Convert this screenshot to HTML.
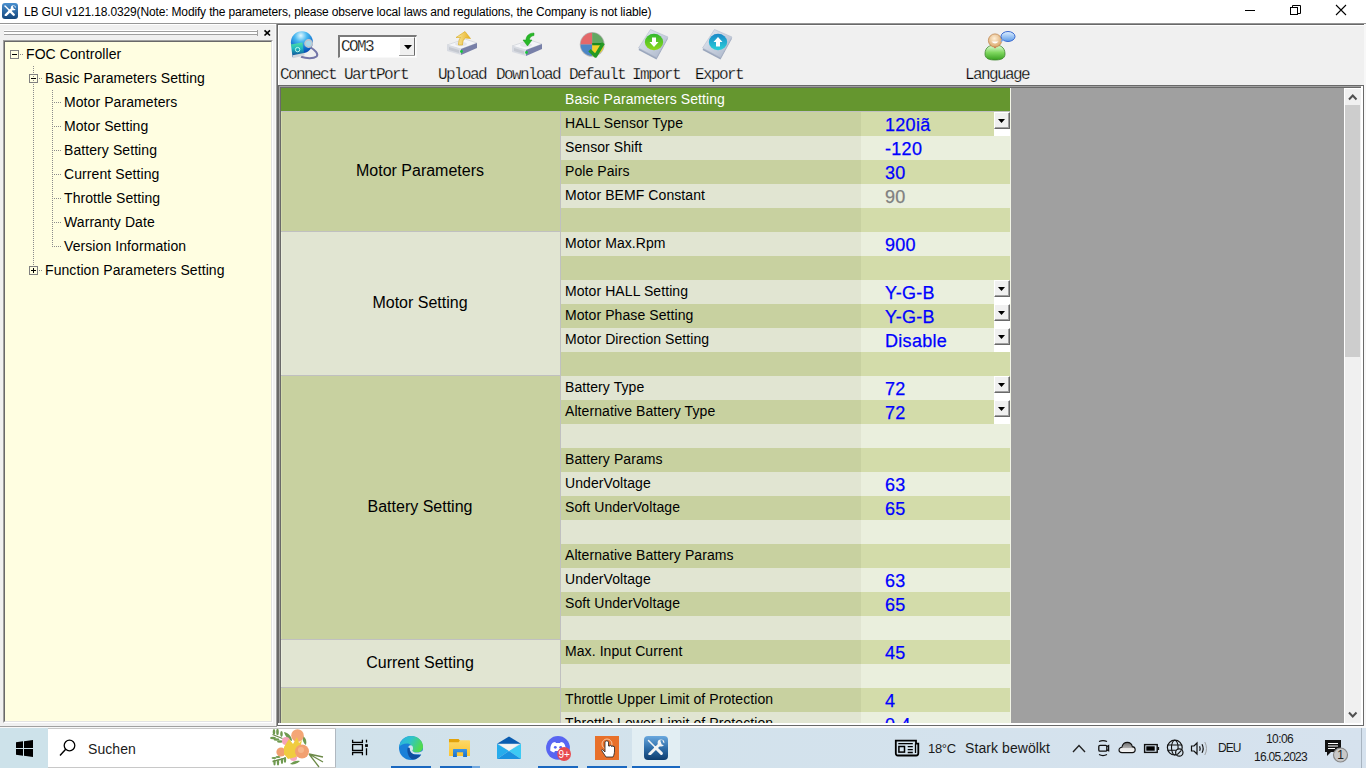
<!DOCTYPE html>
<html><head><meta charset="utf-8"><style>
html,body{margin:0;padding:0;width:1366px;height:768px;overflow:hidden;background:#fff;font-family:'Liberation Sans', sans-serif}
</style></head><body>
<div style="position:absolute;left:0px;top:0px;width:1366px;height:23px;background:#fff"></div><div style="position:absolute;left:0px;top:23px;width:1366px;height:1px;background:#969696"></div><svg style="position:absolute;left:2px;top:3px" width="16" height="16" viewBox="0 0 24 24">
<defs><linearGradient id="ig" x1="0" y1="0" x2="0" y2="1"><stop offset="0" stop-color="#4a90d0"/><stop offset="1" stop-color="#13457a"/></linearGradient>
<mask id="igm"><rect width="24" height="24" fill="#fff"/><path d="M17.2 4.2 L18.6 7.6 L22 8.8" stroke="#000" stroke-width="2.4" fill="none"/></mask></defs>
<rect width="24" height="24" rx="4.5" fill="url(#ig)"/>
<g mask="url(#igm)">
<path d="M4.5 4.5 L11 11" stroke="#fff" stroke-width="2" stroke-linecap="round"/>
<path d="M11.5 11.5 L17.6 17.6" stroke="#fff" stroke-width="3.6" stroke-linecap="round"/>
<path d="M5.6 18.2 L15.5 8.5" stroke="#fff" stroke-width="3.6" stroke-linecap="round"/>
<circle cx="17" cy="7" r="3.8" fill="#fff"/>
</g>
</svg><div style="position:absolute;left:24px;top:0.03px;line-height:24px;font-size:12px;font-family:'Liberation Sans', sans-serif;color:#000;white-space:nowrap;letter-spacing:0.08px"><span style="letter-spacing:-0.15px">LB GUI v121.18.0329(Note: Modify the parameters, please observe local laws and regulations, the Company is not liable)</span></div><div style="position:absolute;left:1245px;top:10px;width:10px;height:1px;background:#000"></div><div style="position:absolute;left:1290px;top:7px;width:8px;height:8px;border:1px solid #000;box-sizing:border-box;background:#fff"></div><svg style="position:absolute;left:1292px;top:5px" width="9" height="9"><path d="M0.5 2 V0.5 H8.5 V8.5 H6" fill="none" stroke="#000" stroke-width="1"/></svg><svg style="position:absolute;left:1335px;top:4px" width="12" height="12"><path d="M1 1 L11 11 M11 1 L1 11" stroke="#000" stroke-width="1.1"/></svg><div style="position:absolute;left:0px;top:24px;width:277px;height:704px;background:#f0f0f0"></div><div style="position:absolute;left:4px;top:30px;width:254px;height:1px;background:#fff"></div><div style="position:absolute;left:4px;top:31px;width:254px;height:1px;background:#a0a0a0"></div><div style="position:absolute;left:4px;top:32px;width:254px;height:2px;background:#fff"></div><div style="position:absolute;left:4px;top:34px;width:254px;height:1px;background:#a0a0a0"></div><div style="position:absolute;left:257px;top:30px;width:1px;height:6px;background:#a0a0a0"></div><svg style="position:absolute;left:263px;top:29px" width="9" height="8"><path d="M1.5 1.3 L7 6.5 M7 1.3 L1.5 6.5" stroke="#000" stroke-width="1.7"/></svg><div style="position:absolute;left:3px;top:40px;width:270px;height:683px;background:#fffee1;border-top:1px solid #a0a0a0;border-left:1px solid #a0a0a0;border-right:1px solid #fff;border-bottom:1px solid #fff;box-sizing:border-box"></div><div style="position:absolute;left:4px;top:41px;width:268px;height:681px;border-top:1px solid #696969;border-left:1px solid #696969;border-right:1px solid #e3e3e3;border-bottom:1px solid #e3e3e3;box-sizing:border-box"></div><div style="position:absolute;left:10px;top:50px;width:9px;height:9px;border:1px solid #808080;box-sizing:border-box"></div><div style="position:absolute;left:12px;top:54px;width:5px;height:1px;background:#000"></div><div style="position:absolute;left:20px;top:54px;width:4px;height:1px;background:repeating-linear-gradient(to right,#8c8c8c 0 1px,transparent 1px 2px)"></div><div style="position:absolute;left:26px;top:40.37px;line-height:28px;font-size:14px;font-family:'Liberation Sans', sans-serif;color:#000;white-space:nowrap;letter-spacing:0.08px">FOC Controller</div><div style="position:absolute;left:33px;top:66px;width:1px;height:200px;background:repeating-linear-gradient(to bottom,#8c8c8c 0 1px,transparent 1px 2px)"></div><div style="position:absolute;left:29px;top:74px;width:9px;height:9px;border:1px solid #808080;box-sizing:border-box"></div><div style="position:absolute;left:31px;top:78px;width:5px;height:1px;background:#000"></div><div style="position:absolute;left:39px;top:78px;width:4px;height:1px;background:repeating-linear-gradient(to right,#8c8c8c 0 1px,transparent 1px 2px)"></div><div style="position:absolute;left:45px;top:64.37px;line-height:28px;font-size:14px;font-family:'Liberation Sans', sans-serif;color:#000;white-space:nowrap;letter-spacing:0.08px">Basic Parameters Setting</div><div style="position:absolute;left:52px;top:90px;width:1px;height:157px;background:repeating-linear-gradient(to bottom,#8c8c8c 0 1px,transparent 1px 2px)"></div><div style="position:absolute;left:52px;top:102px;width:10px;height:1px;background:repeating-linear-gradient(to right,#8c8c8c 0 1px,transparent 1px 2px)"></div><div style="position:absolute;left:64px;top:88.37px;line-height:28px;font-size:14px;font-family:'Liberation Sans', sans-serif;color:#000;white-space:nowrap;letter-spacing:0.08px">Motor Parameters</div><div style="position:absolute;left:52px;top:126px;width:10px;height:1px;background:repeating-linear-gradient(to right,#8c8c8c 0 1px,transparent 1px 2px)"></div><div style="position:absolute;left:64px;top:112.37px;line-height:28px;font-size:14px;font-family:'Liberation Sans', sans-serif;color:#000;white-space:nowrap;letter-spacing:0.08px">Motor Setting</div><div style="position:absolute;left:52px;top:150px;width:10px;height:1px;background:repeating-linear-gradient(to right,#8c8c8c 0 1px,transparent 1px 2px)"></div><div style="position:absolute;left:64px;top:136.37px;line-height:28px;font-size:14px;font-family:'Liberation Sans', sans-serif;color:#000;white-space:nowrap;letter-spacing:0.08px">Battery Setting</div><div style="position:absolute;left:52px;top:174px;width:10px;height:1px;background:repeating-linear-gradient(to right,#8c8c8c 0 1px,transparent 1px 2px)"></div><div style="position:absolute;left:64px;top:160.37px;line-height:28px;font-size:14px;font-family:'Liberation Sans', sans-serif;color:#000;white-space:nowrap;letter-spacing:0.08px">Current Setting</div><div style="position:absolute;left:52px;top:198px;width:10px;height:1px;background:repeating-linear-gradient(to right,#8c8c8c 0 1px,transparent 1px 2px)"></div><div style="position:absolute;left:64px;top:184.37px;line-height:28px;font-size:14px;font-family:'Liberation Sans', sans-serif;color:#000;white-space:nowrap;letter-spacing:0.08px">Throttle Setting</div><div style="position:absolute;left:52px;top:222px;width:10px;height:1px;background:repeating-linear-gradient(to right,#8c8c8c 0 1px,transparent 1px 2px)"></div><div style="position:absolute;left:64px;top:208.37px;line-height:28px;font-size:14px;font-family:'Liberation Sans', sans-serif;color:#000;white-space:nowrap;letter-spacing:0.08px">Warranty Date</div><div style="position:absolute;left:52px;top:246px;width:10px;height:1px;background:repeating-linear-gradient(to right,#8c8c8c 0 1px,transparent 1px 2px)"></div><div style="position:absolute;left:64px;top:232.37px;line-height:28px;font-size:14px;font-family:'Liberation Sans', sans-serif;color:#000;white-space:nowrap;letter-spacing:0.08px">Version Information</div><div style="position:absolute;left:29px;top:266px;width:9px;height:9px;border:1px solid #808080;box-sizing:border-box"></div><div style="position:absolute;left:31px;top:270px;width:5px;height:1px;background:#000"></div><div style="position:absolute;left:33px;top:268px;width:1px;height:5px;background:#000"></div><div style="position:absolute;left:39px;top:270px;width:4px;height:1px;background:repeating-linear-gradient(to right,#8c8c8c 0 1px,transparent 1px 2px)"></div><div style="position:absolute;left:45px;top:256.37px;line-height:28px;font-size:14px;font-family:'Liberation Sans', sans-serif;color:#000;white-space:nowrap;letter-spacing:0.08px">Function Parameters Setting</div><div style="position:absolute;left:277px;top:24px;width:1px;height:704px;background:#696969"></div><div style="position:absolute;left:276px;top:24px;width:1px;height:704px;background:#a0a0a0"></div><div style="position:absolute;left:278px;top:24px;width:1088px;height:61px;background:#f0f0f0"></div><div style="position:absolute;left:277px;top:24px;width:1089px;height:1px;background:#696969"></div><div style="position:absolute;left:278px;top:25px;width:1088px;height:1px;background:#fff"></div><div style="position:absolute;left:278px;top:25px;width:1px;height:60px;background:#fff"></div><div style="position:absolute;left:0px;top:24px;width:276px;height:1px;background:#fff"></div><div style="position:absolute;left:275px;top:25px;width:1px;height:701px;background:#f8f8f8"></div><svg style="position:absolute;left:288px;top:28px" width="34" height="34" viewBox="0 0 34 34">
<defs>
<radialGradient id="gl" cx="0.45" cy="0.2" r="0.8"><stop offset="0" stop-color="#e0f8ff"/><stop offset="0.35" stop-color="#48b8f0"/><stop offset="0.75" stop-color="#1070d0"/><stop offset="1" stop-color="#0a4ab0"/></radialGradient>
<linearGradient id="scr" x1="0" y1="0" x2="0" y2="1"><stop offset="0" stop-color="#50e0a0"/><stop offset="0.4" stop-color="#20b8c0"/><stop offset="1" stop-color="#0a3a90"/></linearGradient>
</defs>
<circle cx="13.9" cy="14.2" r="11" fill="url(#gl)"/>
<path d="M22 19 C27 22 31 26 28.5 28.5 C25.5 31 18 30.5 13 28.8" fill="none" stroke="#7476a8" stroke-width="2"/>
<circle cx="20.6" cy="15.5" r="3.6" fill="#a8d8e8" stroke="#c0c4cc" stroke-width="1.6"/>
<path d="M2.9 16.4 L14.4 14.6 L16.2 26.6 L4.6 29.2 Z" fill="url(#scr)"/>
<path d="M4.6 27.2 L16 25 L16.3 27.5 L4.9 30.2 Z" fill="#d0d4dc"/>
<circle cx="9.6" cy="21.6" r="2.2" fill="none" stroke="#c8fff0" stroke-width="0.9"/>
</svg><div style="position:absolute;left:338px;top:35px;width:79px;height:23px;background:#fff;border-top:2px solid #7a7a7a;border-left:2px solid #7a7a7a;border-bottom:1px solid #f8f8f8;border-right:1px solid #f8f8f8;box-sizing:border-box"></div><div style="position:absolute;left:340px;top:37px;width:76px;height:1px;background:#fff"></div><div style="position:absolute;left:399px;top:37px;width:16px;height:19px;background:#f0f0f0;border-top:1px solid #fff;border-left:1px solid #fff;border-right:1px solid #696969;border-bottom:1px solid #696969;box-sizing:border-box"></div><div style="position:absolute;left:399px;top:55px;width:16px;height:1px;background:#a0a0a0"></div><svg style="position:absolute;left:404px;top:45px" width="8" height="5"><path d="M0 0 H8 L4 4.5 Z" fill="#000"/></svg><div style="position:absolute;left:341px;top:31.21px;line-height:32px;font-size:16px;font-family:'Liberation Mono', monospace;color:#000;white-space:nowrap;letter-spacing:-1.6px;-webkit-text-stroke:0.25px #f0f0f0">COM3</div><div style="position:absolute;left:280px;top:58.71px;line-height:32px;font-size:16px;font-family:'Liberation Mono', monospace;color:#000;white-space:nowrap;letter-spacing:-1.6px;-webkit-text-stroke:0.25px #f0f0f0">Connect UartPort</div><svg style="position:absolute;left:446px;top:30px" width="34" height="30"><g transform="translate(0,0)">
<path d="M1 15 L19 9 L31 13 L15 19 Z" fill="#f4f5f8" stroke="#c8ccd4" stroke-width="0.6"/>
<path d="M1 15 L15 19 L15 25 L1 21 Z" fill="#d8dbe2"/>
<path d="M15 19 L31 13 L31 18 L15 25 Z" fill="#7880a8"/>
<path d="M3 17 L13 20 L13 23 L3 20 Z" fill="#c4c8d0"/>
<circle cx="15.5" cy="21.5" r="1.4" fill="#16c83a"/>
<ellipse cx="15" cy="14" rx="6" ry="2.2" fill="#e2e4ea"/>
</g><defs><linearGradient id="upg" x1="0" y1="0" x2="1" y2="0"><stop offset="0" stop-color="#f8e8a0"/><stop offset="1" stop-color="#e8b020"/></linearGradient></defs><path d="M12.5 15 C12.5 12 13 9 14.5 7.5 L10 7.5 L19 1.5 L24.5 8.5 L19.5 8 C17.5 9 16.5 11.5 16.5 15 Z" fill="url(#upg)" stroke="#d8a818" stroke-width="0.6"/></svg><svg style="position:absolute;left:510px;top:31px" width="34" height="30"><g transform="translate(1,0)">
<path d="M1 15 L19 9 L31 13 L15 19 Z" fill="#f4f5f8" stroke="#c8ccd4" stroke-width="0.6"/>
<path d="M1 15 L15 19 L15 25 L1 21 Z" fill="#d8dbe2"/>
<path d="M15 19 L31 13 L31 18 L15 25 Z" fill="#7880a8"/>
<path d="M3 17 L13 20 L13 23 L3 20 Z" fill="#c4c8d0"/>
<circle cx="15.5" cy="21.5" r="1.4" fill="#16c83a"/>
<ellipse cx="15" cy="14" rx="6" ry="2.2" fill="#e2e4ea"/>
</g><path d="M24 2 C19 2 16 5 16 9 L13 9 L17.5 15 L22 9 L19.5 9 C19.5 6.5 21 5 24 4.5 Z" fill="#28b828" stroke="#1a9a1a" stroke-width="0.5"/></svg><svg style="position:absolute;left:578px;top:30px" width="30" height="30" viewBox="0 0 30 30">
<circle cx="14.2" cy="14.4" r="12.4" fill="#b8b8b8"/>
<path d="M14.2 2.8 A11.6 11.6 0 0 0 2.6 14.4 L14.2 14.4 Z" fill="#e4686a"/>
<path d="M14.2 2.8 A11.6 11.6 0 0 1 25.8 14.4 L14.2 14.4 Z" fill="#62a862"/>
<path d="M2.6 14.4 A11.6 11.6 0 0 0 14.2 26 L14.2 14.4 Z" fill="#4c86c6"/>
<path d="M25.8 14.4 A11.6 11.6 0 0 1 14.2 26 L14.2 14.4 Z" fill="#f2d22a"/>
<path d="M14.2 13 H24 V15.3 H14.2 Z" fill="#1e8a1e"/><path d="M11.5 20.3 L17.5 26 L25.3 13.2" fill="none" stroke="#249a24" stroke-width="3.4" stroke-linejoin="round"/>
</svg><svg style="position:absolute;left:637px;top:28px" width="34" height="34" viewBox="0 0 34 34">
<defs><linearGradient id="bk637" x1="0" y1="0" x2="1" y2="1"><stop offset="0" stop-color="#e8ecf4"/><stop offset="1" stop-color="#a8b4c8"/></linearGradient>
<linearGradient id="cc637" x1="0" y1="0" x2="0" y2="1"><stop offset="0" stop-color="#30b830"/><stop offset="1" stop-color="#8ed81a"/></linearGradient></defs>
<path d="M1.5 22 L13.5 3 L31 10.5 L19.5 31.5 Z" fill="#9aa6bc"/>
<path d="M1.5 20 L13.5 1.5 L31 9 L19.5 29.5 Z" fill="url(#bk637)" stroke="#b4bccc" stroke-width="0.6"/>
<ellipse cx="17" cy="14" rx="9.2" ry="8.2" fill="url(#cc637)"/>
<g transform="translate(17,14)"><path d="M-2 -4.5 H2 V0 H4.5 L0 5 L-4.5 0 H-2 Z" fill="#fff"/></g>
</svg><svg style="position:absolute;left:701px;top:28px" width="34" height="34" viewBox="0 0 34 34">
<defs><linearGradient id="bk701" x1="0" y1="0" x2="1" y2="1"><stop offset="0" stop-color="#e8ecf4"/><stop offset="1" stop-color="#a8b4c8"/></linearGradient>
<linearGradient id="cc701" x1="0" y1="0" x2="0" y2="1"><stop offset="0" stop-color="#1a88c8"/><stop offset="1" stop-color="#2ad0d8"/></linearGradient></defs>
<path d="M1.5 22 L13.5 3 L31 10.5 L19.5 31.5 Z" fill="#9aa6bc"/>
<path d="M1.5 20 L13.5 1.5 L31 9 L19.5 29.5 Z" fill="url(#bk701)" stroke="#b4bccc" stroke-width="0.6"/>
<ellipse cx="17" cy="14" rx="9.2" ry="8.2" fill="url(#cc701)"/>
<g transform="translate(17,14)"><path d="M-2 4.5 H2 V0 H4.5 L0 -5 L-4.5 0 H-2 Z" fill="#fff"/></g>
</svg><svg style="position:absolute;left:983px;top:29px" width="36" height="34" viewBox="0 0 36 34">
<defs><radialGradient id="hd" cx="0.45" cy="0.35" r="0.7"><stop offset="0" stop-color="#fff0d8"/><stop offset="1" stop-color="#d8a060"/></radialGradient>
<linearGradient id="bd" x1="0" y1="0" x2="0" y2="1"><stop offset="0" stop-color="#e8ffe0"/><stop offset="0.5" stop-color="#80d860"/><stop offset="1" stop-color="#38a020"/></linearGradient>
<linearGradient id="bb" x1="0" y1="0" x2="0" y2="1"><stop offset="0" stop-color="#e0f0ff"/><stop offset="1" stop-color="#5a9ae8"/></linearGradient></defs>
<path d="M2 25 C2 18 7 16 12 16 C17 16 22 18 22 25 C22 30 17 31 12 31 C7 31 2 30 2 25 Z" fill="url(#bd)" stroke="#408830" stroke-width="0.8"/>
<path d="M10.5 17 L13.5 17 L12 19.5 Z" fill="#e02020"/>
<circle cx="12" cy="11.5" r="6.6" fill="url(#hd)" stroke="#c08850" stroke-width="0.8"/>
<path d="M8.5 12.5 Q12 16.5 15.5 12.5 Z" fill="#fff"/>
<ellipse cx="25" cy="7.5" rx="7" ry="5" fill="url(#bb)" stroke="#3a6ad0" stroke-width="1"/>
<path d="M19 10 L17.5 13 L21.5 11.5 Z" fill="#7aaaf0"/>
</svg><div style="position:absolute;left:438px;top:58.71px;line-height:32px;font-size:16px;font-family:'Liberation Mono', monospace;color:#000;white-space:nowrap;letter-spacing:-1.6px;-webkit-text-stroke:0.25px #f0f0f0">Upload</div><div style="position:absolute;left:496px;top:58.71px;line-height:32px;font-size:16px;font-family:'Liberation Mono', monospace;color:#000;white-space:nowrap;letter-spacing:-1.6px;-webkit-text-stroke:0.25px #f0f0f0">Download</div><div style="position:absolute;left:569px;top:58.71px;line-height:32px;font-size:16px;font-family:'Liberation Mono', monospace;color:#000;white-space:nowrap;letter-spacing:-1.6px;-webkit-text-stroke:0.25px #f0f0f0">Default</div><div style="position:absolute;left:632px;top:58.71px;line-height:32px;font-size:16px;font-family:'Liberation Mono', monospace;color:#000;white-space:nowrap;letter-spacing:-1.6px;-webkit-text-stroke:0.25px #f0f0f0">Import</div><div style="position:absolute;left:695px;top:58.71px;line-height:32px;font-size:16px;font-family:'Liberation Mono', monospace;color:#000;white-space:nowrap;letter-spacing:-1.6px;-webkit-text-stroke:0.25px #f0f0f0">Export</div><div style="position:absolute;left:965px;top:58.71px;line-height:32px;font-size:16px;font-family:'Liberation Mono', monospace;color:#000;white-space:nowrap;letter-spacing:-1.6px;-webkit-text-stroke:0.25px #f0f0f0">Language</div><div style="position:absolute;left:278px;top:85px;width:1088px;height:643px;background:#f0f0f0"></div><div style="position:absolute;left:278px;top:85px;width:1086px;height:1px;background:#696969"></div><div style="position:absolute;left:278px;top:86px;width:1086px;height:1px;background:#a0a0a0"></div><div style="position:absolute;left:279px;top:87px;width:1084px;height:1px;background:#696969"></div><div style="position:absolute;left:278px;top:85px;width:1px;height:641px;background:#696969"></div><div style="position:absolute;left:279px;top:86px;width:1px;height:637px;background:#a0a0a0"></div><div style="position:absolute;left:280px;top:87px;width:1px;height:636px;background:#696969"></div><div style="position:absolute;left:281px;top:88px;width:1063px;height:635px;background:#a0a0a0"></div><div style="position:absolute;left:281px;top:88px;width:729px;height:23px;background:#65962f"></div><div style="position:absolute;left:281px;top:111px;width:729px;height:1px;background:#c0c0c0"></div><div style="position:absolute;left:565px;top:85.37px;line-height:28px;font-size:14px;font-family:'Liberation Sans', sans-serif;color:#fff;white-space:nowrap;letter-spacing:0.08px">Basic Parameters Setting</div><div style="position:absolute;left:281px;top:112px;width:729px;height:611px;overflow:hidden"><div style="position:absolute;left:280px;top:0px;width:300px;height:24px;background:#c8d1a0"></div><div style="position:absolute;left:580px;top:0px;width:149px;height:24px;background:#d3dcaa"></div><div style="position:absolute;left:284px;top:-2.63px;line-height:28px;font-size:14px;font-family:'Liberation Sans', sans-serif;color:#000;white-space:nowrap;letter-spacing:0.08px">HALL Sensor Type</div><div style="position:absolute;left:604px;top:-5.45px;line-height:36px;font-size:18px;font-family:'Liberation Sans', sans-serif;color:#0000ff;white-space:nowrap;letter-spacing:0.3px;-webkit-text-stroke:0.25px #0000ff">120iã</div><div style="position:absolute;left:713px;top:0px;width:16px;height:17px;background:#f0f0f0;border-top:1px solid #fff;border-left:1px solid #fff;border-right:1px solid #696969;border-bottom:1px solid #696969;box-sizing:border-box"></div><div style="position:absolute;left:727px;top:1px;width:1px;height:15px;background:#a0a0a0"></div><div style="position:absolute;left:714px;top:15px;width:14px;height:1px;background:#a0a0a0"></div><svg style="position:absolute;left:717px;top:7px" width="7" height="4"><path d="M0 0 H7 L3.5 4 Z" fill="#000"/></svg><div style="position:absolute;left:713px;top:17px;width:17px;height:7px;background:#fff"></div><div style="position:absolute;left:280px;top:24px;width:300px;height:24px;background:#e1e5d2"></div><div style="position:absolute;left:580px;top:24px;width:149px;height:24px;background:#eaefdd"></div><div style="position:absolute;left:284px;top:21.37px;line-height:28px;font-size:14px;font-family:'Liberation Sans', sans-serif;color:#000;white-space:nowrap;letter-spacing:0.08px">Sensor Shift</div><div style="position:absolute;left:604px;top:18.55px;line-height:36px;font-size:18px;font-family:'Liberation Sans', sans-serif;color:#0000ff;white-space:nowrap;letter-spacing:0.3px;-webkit-text-stroke:0.25px #0000ff">-120</div><div style="position:absolute;left:280px;top:48px;width:300px;height:24px;background:#c8d1a0"></div><div style="position:absolute;left:580px;top:48px;width:149px;height:24px;background:#d3dcaa"></div><div style="position:absolute;left:284px;top:45.37px;line-height:28px;font-size:14px;font-family:'Liberation Sans', sans-serif;color:#000;white-space:nowrap;letter-spacing:0.08px">Pole Pairs</div><div style="position:absolute;left:604px;top:42.55px;line-height:36px;font-size:18px;font-family:'Liberation Sans', sans-serif;color:#0000ff;white-space:nowrap;letter-spacing:0.3px;-webkit-text-stroke:0.25px #0000ff">30</div><div style="position:absolute;left:280px;top:72px;width:300px;height:24px;background:#e1e5d2"></div><div style="position:absolute;left:580px;top:72px;width:149px;height:24px;background:#eaefdd"></div><div style="position:absolute;left:284px;top:69.37px;line-height:28px;font-size:14px;font-family:'Liberation Sans', sans-serif;color:#000;white-space:nowrap;letter-spacing:0.08px">Motor BEMF Constant</div><div style="position:absolute;left:604px;top:66.55px;line-height:36px;font-size:18px;font-family:'Liberation Sans', sans-serif;color:#808080;white-space:nowrap;letter-spacing:0.3px;-webkit-text-stroke:0.25px #808080">90</div><div style="position:absolute;left:280px;top:96px;width:300px;height:24px;background:#c8d1a0"></div><div style="position:absolute;left:580px;top:96px;width:149px;height:24px;background:#d3dcaa"></div><div style="position:absolute;left:280px;top:120px;width:300px;height:24px;background:#e1e5d2"></div><div style="position:absolute;left:580px;top:120px;width:149px;height:24px;background:#eaefdd"></div><div style="position:absolute;left:284px;top:117.37px;line-height:28px;font-size:14px;font-family:'Liberation Sans', sans-serif;color:#000;white-space:nowrap;letter-spacing:0.08px">Motor Max.Rpm</div><div style="position:absolute;left:604px;top:114.55px;line-height:36px;font-size:18px;font-family:'Liberation Sans', sans-serif;color:#0000ff;white-space:nowrap;letter-spacing:0.3px;-webkit-text-stroke:0.25px #0000ff">900</div><div style="position:absolute;left:280px;top:144px;width:300px;height:24px;background:#c8d1a0"></div><div style="position:absolute;left:580px;top:144px;width:149px;height:24px;background:#d3dcaa"></div><div style="position:absolute;left:280px;top:168px;width:300px;height:24px;background:#e1e5d2"></div><div style="position:absolute;left:580px;top:168px;width:149px;height:24px;background:#eaefdd"></div><div style="position:absolute;left:284px;top:165.37px;line-height:28px;font-size:14px;font-family:'Liberation Sans', sans-serif;color:#000;white-space:nowrap;letter-spacing:0.08px">Motor HALL Setting</div><div style="position:absolute;left:604px;top:162.55px;line-height:36px;font-size:18px;font-family:'Liberation Sans', sans-serif;color:#0000ff;white-space:nowrap;letter-spacing:0.3px;-webkit-text-stroke:0.25px #0000ff">Y-G-B</div><div style="position:absolute;left:713px;top:168px;width:16px;height:17px;background:#f0f0f0;border-top:1px solid #fff;border-left:1px solid #fff;border-right:1px solid #696969;border-bottom:1px solid #696969;box-sizing:border-box"></div><div style="position:absolute;left:727px;top:169px;width:1px;height:15px;background:#a0a0a0"></div><div style="position:absolute;left:714px;top:183px;width:14px;height:1px;background:#a0a0a0"></div><svg style="position:absolute;left:717px;top:175px" width="7" height="4"><path d="M0 0 H7 L3.5 4 Z" fill="#000"/></svg><div style="position:absolute;left:713px;top:185px;width:17px;height:7px;background:#fff"></div><div style="position:absolute;left:280px;top:192px;width:300px;height:24px;background:#c8d1a0"></div><div style="position:absolute;left:580px;top:192px;width:149px;height:24px;background:#d3dcaa"></div><div style="position:absolute;left:284px;top:189.37px;line-height:28px;font-size:14px;font-family:'Liberation Sans', sans-serif;color:#000;white-space:nowrap;letter-spacing:0.08px">Motor Phase Setting</div><div style="position:absolute;left:604px;top:186.55px;line-height:36px;font-size:18px;font-family:'Liberation Sans', sans-serif;color:#0000ff;white-space:nowrap;letter-spacing:0.3px;-webkit-text-stroke:0.25px #0000ff">Y-G-B</div><div style="position:absolute;left:713px;top:192px;width:16px;height:17px;background:#f0f0f0;border-top:1px solid #fff;border-left:1px solid #fff;border-right:1px solid #696969;border-bottom:1px solid #696969;box-sizing:border-box"></div><div style="position:absolute;left:727px;top:193px;width:1px;height:15px;background:#a0a0a0"></div><div style="position:absolute;left:714px;top:207px;width:14px;height:1px;background:#a0a0a0"></div><svg style="position:absolute;left:717px;top:199px" width="7" height="4"><path d="M0 0 H7 L3.5 4 Z" fill="#000"/></svg><div style="position:absolute;left:713px;top:209px;width:17px;height:7px;background:#fff"></div><div style="position:absolute;left:280px;top:216px;width:300px;height:24px;background:#e1e5d2"></div><div style="position:absolute;left:580px;top:216px;width:149px;height:24px;background:#eaefdd"></div><div style="position:absolute;left:284px;top:213.37px;line-height:28px;font-size:14px;font-family:'Liberation Sans', sans-serif;color:#000;white-space:nowrap;letter-spacing:0.08px">Motor Direction Setting</div><div style="position:absolute;left:604px;top:210.55px;line-height:36px;font-size:18px;font-family:'Liberation Sans', sans-serif;color:#0000ff;white-space:nowrap;letter-spacing:0.3px;-webkit-text-stroke:0.25px #0000ff">Disable</div><div style="position:absolute;left:713px;top:216px;width:16px;height:17px;background:#f0f0f0;border-top:1px solid #fff;border-left:1px solid #fff;border-right:1px solid #696969;border-bottom:1px solid #696969;box-sizing:border-box"></div><div style="position:absolute;left:727px;top:217px;width:1px;height:15px;background:#a0a0a0"></div><div style="position:absolute;left:714px;top:231px;width:14px;height:1px;background:#a0a0a0"></div><svg style="position:absolute;left:717px;top:223px" width="7" height="4"><path d="M0 0 H7 L3.5 4 Z" fill="#000"/></svg><div style="position:absolute;left:713px;top:233px;width:17px;height:7px;background:#fff"></div><div style="position:absolute;left:280px;top:240px;width:300px;height:24px;background:#c8d1a0"></div><div style="position:absolute;left:580px;top:240px;width:149px;height:24px;background:#d3dcaa"></div><div style="position:absolute;left:280px;top:264px;width:300px;height:24px;background:#e1e5d2"></div><div style="position:absolute;left:580px;top:264px;width:149px;height:24px;background:#eaefdd"></div><div style="position:absolute;left:284px;top:261.37px;line-height:28px;font-size:14px;font-family:'Liberation Sans', sans-serif;color:#000;white-space:nowrap;letter-spacing:0.08px">Battery Type</div><div style="position:absolute;left:604px;top:258.55px;line-height:36px;font-size:18px;font-family:'Liberation Sans', sans-serif;color:#0000ff;white-space:nowrap;letter-spacing:0.3px;-webkit-text-stroke:0.25px #0000ff">72</div><div style="position:absolute;left:713px;top:264px;width:16px;height:17px;background:#f0f0f0;border-top:1px solid #fff;border-left:1px solid #fff;border-right:1px solid #696969;border-bottom:1px solid #696969;box-sizing:border-box"></div><div style="position:absolute;left:727px;top:265px;width:1px;height:15px;background:#a0a0a0"></div><div style="position:absolute;left:714px;top:279px;width:14px;height:1px;background:#a0a0a0"></div><svg style="position:absolute;left:717px;top:271px" width="7" height="4"><path d="M0 0 H7 L3.5 4 Z" fill="#000"/></svg><div style="position:absolute;left:713px;top:281px;width:17px;height:7px;background:#fff"></div><div style="position:absolute;left:280px;top:288px;width:300px;height:24px;background:#c8d1a0"></div><div style="position:absolute;left:580px;top:288px;width:149px;height:24px;background:#d3dcaa"></div><div style="position:absolute;left:284px;top:285.37px;line-height:28px;font-size:14px;font-family:'Liberation Sans', sans-serif;color:#000;white-space:nowrap;letter-spacing:0.08px">Alternative Battery Type</div><div style="position:absolute;left:604px;top:282.55px;line-height:36px;font-size:18px;font-family:'Liberation Sans', sans-serif;color:#0000ff;white-space:nowrap;letter-spacing:0.3px;-webkit-text-stroke:0.25px #0000ff">72</div><div style="position:absolute;left:713px;top:288px;width:16px;height:17px;background:#f0f0f0;border-top:1px solid #fff;border-left:1px solid #fff;border-right:1px solid #696969;border-bottom:1px solid #696969;box-sizing:border-box"></div><div style="position:absolute;left:727px;top:289px;width:1px;height:15px;background:#a0a0a0"></div><div style="position:absolute;left:714px;top:303px;width:14px;height:1px;background:#a0a0a0"></div><svg style="position:absolute;left:717px;top:295px" width="7" height="4"><path d="M0 0 H7 L3.5 4 Z" fill="#000"/></svg><div style="position:absolute;left:713px;top:305px;width:17px;height:7px;background:#fff"></div><div style="position:absolute;left:280px;top:312px;width:300px;height:24px;background:#e1e5d2"></div><div style="position:absolute;left:580px;top:312px;width:149px;height:24px;background:#eaefdd"></div><div style="position:absolute;left:280px;top:336px;width:300px;height:24px;background:#c8d1a0"></div><div style="position:absolute;left:580px;top:336px;width:149px;height:24px;background:#d3dcaa"></div><div style="position:absolute;left:284px;top:333.37px;line-height:28px;font-size:14px;font-family:'Liberation Sans', sans-serif;color:#000;white-space:nowrap;letter-spacing:0.08px">Battery Params</div><div style="position:absolute;left:280px;top:360px;width:300px;height:24px;background:#e1e5d2"></div><div style="position:absolute;left:580px;top:360px;width:149px;height:24px;background:#eaefdd"></div><div style="position:absolute;left:284px;top:357.37px;line-height:28px;font-size:14px;font-family:'Liberation Sans', sans-serif;color:#000;white-space:nowrap;letter-spacing:0.08px">UnderVoltage</div><div style="position:absolute;left:604px;top:354.55px;line-height:36px;font-size:18px;font-family:'Liberation Sans', sans-serif;color:#0000ff;white-space:nowrap;letter-spacing:0.3px;-webkit-text-stroke:0.25px #0000ff">63</div><div style="position:absolute;left:280px;top:384px;width:300px;height:24px;background:#c8d1a0"></div><div style="position:absolute;left:580px;top:384px;width:149px;height:24px;background:#d3dcaa"></div><div style="position:absolute;left:284px;top:381.37px;line-height:28px;font-size:14px;font-family:'Liberation Sans', sans-serif;color:#000;white-space:nowrap;letter-spacing:0.08px">Soft UnderVoltage</div><div style="position:absolute;left:604px;top:378.55px;line-height:36px;font-size:18px;font-family:'Liberation Sans', sans-serif;color:#0000ff;white-space:nowrap;letter-spacing:0.3px;-webkit-text-stroke:0.25px #0000ff">65</div><div style="position:absolute;left:280px;top:408px;width:300px;height:24px;background:#e1e5d2"></div><div style="position:absolute;left:580px;top:408px;width:149px;height:24px;background:#eaefdd"></div><div style="position:absolute;left:280px;top:432px;width:300px;height:24px;background:#c8d1a0"></div><div style="position:absolute;left:580px;top:432px;width:149px;height:24px;background:#d3dcaa"></div><div style="position:absolute;left:284px;top:429.37px;line-height:28px;font-size:14px;font-family:'Liberation Sans', sans-serif;color:#000;white-space:nowrap;letter-spacing:0.08px">Alternative Battery Params</div><div style="position:absolute;left:280px;top:456px;width:300px;height:24px;background:#e1e5d2"></div><div style="position:absolute;left:580px;top:456px;width:149px;height:24px;background:#eaefdd"></div><div style="position:absolute;left:284px;top:453.37px;line-height:28px;font-size:14px;font-family:'Liberation Sans', sans-serif;color:#000;white-space:nowrap;letter-spacing:0.08px">UnderVoltage</div><div style="position:absolute;left:604px;top:450.55px;line-height:36px;font-size:18px;font-family:'Liberation Sans', sans-serif;color:#0000ff;white-space:nowrap;letter-spacing:0.3px;-webkit-text-stroke:0.25px #0000ff">63</div><div style="position:absolute;left:280px;top:480px;width:300px;height:24px;background:#c8d1a0"></div><div style="position:absolute;left:580px;top:480px;width:149px;height:24px;background:#d3dcaa"></div><div style="position:absolute;left:284px;top:477.37px;line-height:28px;font-size:14px;font-family:'Liberation Sans', sans-serif;color:#000;white-space:nowrap;letter-spacing:0.08px">Soft UnderVoltage</div><div style="position:absolute;left:604px;top:474.55px;line-height:36px;font-size:18px;font-family:'Liberation Sans', sans-serif;color:#0000ff;white-space:nowrap;letter-spacing:0.3px;-webkit-text-stroke:0.25px #0000ff">65</div><div style="position:absolute;left:280px;top:504px;width:300px;height:24px;background:#e1e5d2"></div><div style="position:absolute;left:580px;top:504px;width:149px;height:24px;background:#eaefdd"></div><div style="position:absolute;left:280px;top:528px;width:300px;height:24px;background:#c8d1a0"></div><div style="position:absolute;left:580px;top:528px;width:149px;height:24px;background:#d3dcaa"></div><div style="position:absolute;left:284px;top:525.37px;line-height:28px;font-size:14px;font-family:'Liberation Sans', sans-serif;color:#000;white-space:nowrap;letter-spacing:0.08px">Max. Input Current</div><div style="position:absolute;left:604px;top:522.55px;line-height:36px;font-size:18px;font-family:'Liberation Sans', sans-serif;color:#0000ff;white-space:nowrap;letter-spacing:0.3px;-webkit-text-stroke:0.25px #0000ff">45</div><div style="position:absolute;left:280px;top:552px;width:300px;height:24px;background:#e1e5d2"></div><div style="position:absolute;left:580px;top:552px;width:149px;height:24px;background:#eaefdd"></div><div style="position:absolute;left:280px;top:576px;width:300px;height:24px;background:#c8d1a0"></div><div style="position:absolute;left:580px;top:576px;width:149px;height:24px;background:#d3dcaa"></div><div style="position:absolute;left:284px;top:573.37px;line-height:28px;font-size:14px;font-family:'Liberation Sans', sans-serif;color:#000;white-space:nowrap;letter-spacing:0.08px">Throttle Upper Limit of Protection</div><div style="position:absolute;left:604px;top:570.55px;line-height:36px;font-size:18px;font-family:'Liberation Sans', sans-serif;color:#0000ff;white-space:nowrap;letter-spacing:0.3px;-webkit-text-stroke:0.25px #0000ff">4</div><div style="position:absolute;left:280px;top:600px;width:300px;height:24px;background:#e1e5d2"></div><div style="position:absolute;left:580px;top:600px;width:149px;height:24px;background:#eaefdd"></div><div style="position:absolute;left:284px;top:597.37px;line-height:28px;font-size:14px;font-family:'Liberation Sans', sans-serif;color:#000;white-space:nowrap;letter-spacing:0.08px">Throttle Lower Limit of Protection</div><div style="position:absolute;left:604px;top:594.55px;line-height:36px;font-size:18px;font-family:'Liberation Sans', sans-serif;color:#0000ff;white-space:nowrap;letter-spacing:0.3px;-webkit-text-stroke:0.25px #0000ff">0.4</div><div style="position:absolute;left:0px;top:0px;width:279px;height:119px;background:#c8d1a0"></div><div style="position:absolute;left:0px;top:119px;width:279px;height:1px;background:#c0c0c0"></div><div style="position:absolute;left:0px;top:0px;width:1px;height:119px;background:#d2dbaa"></div><div style="position:absolute;left:4.0px;width:270px;text-align:center;top:42.71px;line-height:32px;font-size:16px;font-family:'Liberation Sans', sans-serif;color:#000;white-space:nowrap">Motor Parameters</div><div style="position:absolute;left:0px;top:120px;width:279px;height:143px;background:#e1e5d2"></div><div style="position:absolute;left:0px;top:263px;width:279px;height:1px;background:#c0c0c0"></div><div style="position:absolute;left:0px;top:120px;width:1px;height:143px;background:#e9eddb"></div><div style="position:absolute;left:4.0px;width:270px;text-align:center;top:174.71px;line-height:32px;font-size:16px;font-family:'Liberation Sans', sans-serif;color:#000;white-space:nowrap">Motor Setting</div><div style="position:absolute;left:0px;top:264px;width:279px;height:263px;background:#c8d1a0"></div><div style="position:absolute;left:0px;top:527px;width:279px;height:1px;background:#c0c0c0"></div><div style="position:absolute;left:0px;top:264px;width:1px;height:263px;background:#d2dbaa"></div><div style="position:absolute;left:4.0px;width:270px;text-align:center;top:378.71px;line-height:32px;font-size:16px;font-family:'Liberation Sans', sans-serif;color:#000;white-space:nowrap">Battery Setting</div><div style="position:absolute;left:0px;top:528px;width:279px;height:47px;background:#e1e5d2"></div><div style="position:absolute;left:0px;top:575px;width:279px;height:1px;background:#c0c0c0"></div><div style="position:absolute;left:0px;top:528px;width:1px;height:47px;background:#e9eddb"></div><div style="position:absolute;left:4.0px;width:270px;text-align:center;top:534.71px;line-height:32px;font-size:16px;font-family:'Liberation Sans', sans-serif;color:#000;white-space:nowrap">Current Setting</div><div style="position:absolute;left:0px;top:576px;width:279px;height:95px;background:#c8d1a0"></div><div style="position:absolute;left:0px;top:671px;width:279px;height:1px;background:#c0c0c0"></div><div style="position:absolute;left:0px;top:576px;width:1px;height:95px;background:#d2dbaa"></div><div style="position:absolute;left:4.0px;width:270px;text-align:center;top:606.71px;line-height:32px;font-size:16px;font-family:'Liberation Sans', sans-serif;color:#000;white-space:nowrap">Throttle Setting</div><div style="position:absolute;left:279px;top:0px;width:1px;height:611px;background:#c0c0c0"></div></div><div style="position:absolute;left:1010px;top:88px;width:1px;height:635px;background:#f2f5e6"></div><div style="position:absolute;left:278px;top:723px;width:1086px;height:2px;background:#fff"></div><div style="position:absolute;left:278px;top:725px;width:1086px;height:1px;background:#696969"></div><div style="position:absolute;left:1344px;top:88px;width:17px;height:635px;background:#f0f0f0;border-left:1px solid #fff;border-top:1px solid #fff;box-sizing:border-box"></div><div style="position:absolute;left:1345px;top:105px;width:15px;height:252px;background:#cdcdcd"></div><svg style="position:absolute;left:1348px;top:93px" width="10" height="8"><path d="M1 6.5 L4.75 2.5 L8.5 6.5" fill="none" stroke="#505050" stroke-width="2"/></svg><svg style="position:absolute;left:1348px;top:711px" width="10" height="8"><path d="M1 1.5 L4.75 5.5 L8.5 1.5" fill="none" stroke="#505050" stroke-width="2"/></svg><div style="position:absolute;left:1361px;top:86px;width:2px;height:639px;background:#fff"></div><div style="position:absolute;left:1363px;top:85px;width:1px;height:641px;background:#696969"></div><div style="position:absolute;left:1364px;top:24px;width:2px;height:704px;background:#f8f8f8"></div><div style="position:absolute;left:0px;top:726px;width:277px;height:1px;background:#a0a0a0"></div><div style="position:absolute;left:277px;top:726px;width:1089px;height:1px;background:#fafafa"></div><div style="position:absolute;left:0px;top:727px;width:1366px;height:1px;background:#f8f8f8"></div><div style="position:absolute;left:0px;top:728px;width:1366px;height:40px;background:linear-gradient(to right,#cfe2ea,#d6e2ee)"></div><div style="position:absolute;left:0px;top:728px;width:48px;height:40px;background:#cde2ea"></div><svg style="position:absolute;left:16px;top:740px" width="17" height="17" viewBox="0 0 17 17">
<path d="M0 2.3 L7 1.3 V8 H0 Z M8 1.15 L17 0 V8 H8 Z M0 9 H7 V15.7 L0 14.7 Z M8 9 H17 V17 L8 15.85 Z" fill="#000"/></svg><div style="position:absolute;left:48px;top:728px;width:288px;height:40px;background:#fff;border-right:1px solid #b0b8c0;box-sizing:border-box"></div><div style="position:absolute;left:48px;top:767px;width:288px;height:1px;background:#c8c8c8"></div><div style="position:absolute;left:48px;top:728px;width:288px;height:1px;background:#c8c8c8"></div><svg style="position:absolute;left:59px;top:739px" width="18" height="18" viewBox="0 0 18 18">
<circle cx="10.5" cy="6.5" r="5.3" fill="none" stroke="#000" stroke-width="1.3"/><path d="M6.7 10.3 L1 16.5" stroke="#000" stroke-width="1.4"/></svg><div style="position:absolute;left:88px;top:735.37px;line-height:28px;font-size:14px;font-family:'Liberation Sans', sans-serif;color:#1a1a1a;white-space:nowrap;letter-spacing:0.08px">Suchen</div><svg style="position:absolute;left:262px;top:726px" width="74" height="42" viewBox="0 0 74 42">
<path d="M10.5 8.5 L20.5 12.5 M10.5 35.5 L24 32 M47 28 L61 31 M47 28 L57 41 M47 28 L61 36" stroke="#6c8a48" stroke-width="1.3" fill="none"/>
<g fill="#6f9a50">
<ellipse cx="12" cy="6" rx="1.3" ry="3"/><ellipse cx="15.5" cy="6" rx="1.3" ry="3.2"/><ellipse cx="19.5" cy="8" rx="1.3" ry="3"/>
<ellipse cx="11" cy="12" rx="3" ry="1.2"/><ellipse cx="14.5" cy="13.5" rx="3" ry="1.3"/><ellipse cx="18" cy="15.5" rx="3" ry="1.3"/>
<ellipse cx="12.5" cy="36.5" rx="1.2" ry="3"/><ellipse cx="16" cy="36.5" rx="1.2" ry="3"/><ellipse cx="20" cy="35" rx="1.2" ry="3"/><ellipse cx="23" cy="34" rx="1.2" ry="3"/>
<ellipse cx="12" cy="32" rx="2.5" ry="1"/><ellipse cx="16" cy="31" rx="2.5" ry="1"/>
<path d="M22 6 C27 7 30 11 30 15 C26 14 23 10 22 6 Z"/>
<path d="M41 10 C44 12 45 15 44 19 C41 17 40 13 41 10 Z"/>
<path d="M28 38 C31 35 35 34 38 35 C35 38 31 39 28 38 Z"/>
</g>
<circle cx="24" cy="15" r="4" fill="#f6a2b8"/>
<circle cx="31.5" cy="31.5" r="3.6" fill="#f6a8c0"/>
<circle cx="35.5" cy="9.5" r="6.3" fill="#f4a676"/>
<circle cx="19" cy="26" r="4.6" fill="#f2a070"/>
<path d="M22 21 L27 13 L31 18 L35 11 L37 17 L40 14 L38 23 L34 31 L26 33 L22 28 Z" fill="#f0cc40"/>
<circle cx="40" cy="25.5" r="7" fill="#f2a070"/>
<circle cx="39" cy="24" r="3" fill="#f6b68a"/>
</svg><svg style="position:absolute;left:350px;top:738px" width="20" height="19" viewBox="0 0 20 19">
<path d="M2.6 1.8 V4.4 H12.4 V1.8 M2.6 17.2 V14.5 H12.4 V17.2" fill="none" stroke="#000" stroke-width="1.3"/>
<rect x="2.6" y="6.5" width="9.8" height="5.9" fill="none" stroke="#000" stroke-width="1.3"/>
<path d="M16.5 1.8 V4.6 M16.5 10.3 V17.2" stroke="#000" stroke-width="1.3"/><rect x="15.1" y="6.2" width="2.8" height="2.7" fill="#000"/>
</svg><svg style="position:absolute;left:399px;top:736px" width="25" height="25" viewBox="0 0 25 25">
<defs><linearGradient id="eg1" x1="0" y1="0" x2="1" y2="0.4"><stop offset="0" stop-color="#2aaee8"/><stop offset="0.5" stop-color="#30c4c8"/><stop offset="1" stop-color="#50da50"/></linearGradient></defs>
<circle cx="12" cy="12" r="12" fill="#1a80d8"/>
<path d="M0.2 11 C1 4.5 6 0 12 0 C19 0 24 5 24 10.5 C24 14.5 21 16.5 17.5 16.5 C14 16.5 12.5 14.5 13 12.5 C13.5 10 11.5 7.5 8 7.5 C4.5 7.5 1.5 9 0.2 11 Z" fill="url(#eg1)"/>
<path d="M13 12.5 C12.5 14.5 14 16.5 17.5 16.5 C20 16.5 22.5 16 24.5 14 L24.5 20 C22 17.5 17 19 14 18 C11.5 17 10.5 15 11 13 Z" fill="#d0e4ec"/>
<ellipse cx="11.6" cy="12.3" rx="2.4" ry="3" fill="#d0e4ec"/>
<path d="M8.6 12 C7.5 17.5 10.5 22.5 13.8 23.6 C17.5 23.5 20.5 21 22.2 18.4 C19.5 19.3 16.5 19.2 14.5 18.2 C12 17 10.5 15 10.8 12.2 C10.2 11.2 9.2 11.3 8.6 12 Z" fill="#0f4fa0"/>
</svg><div style="position:absolute;left:391px;top:766px;width:40px;height:2px;background:#1a68c0"></div><svg style="position:absolute;left:448px;top:738px" width="23" height="20" viewBox="0 0 23 20">
<defs><linearGradient id="exb" x1="0" y1="0" x2="0" y2="1"><stop offset="0" stop-color="#fdd868"/><stop offset="1" stop-color="#fbc430"/></linearGradient>
<linearGradient id="exa" x1="0" y1="0" x2="0" y2="1"><stop offset="0" stop-color="#3c96e6"/><stop offset="1" stop-color="#1a70c8"/></linearGradient></defs>
<path d="M1 2.2 H21.4 C21.8 2.2 22 2.4 22 2.8 V17.4 C22 17.8 21.8 18 21.4 18 H1.6 C1.2 18 1 17.8 1 17.4 Z" fill="url(#exb)"/>
<path d="M1 1 H10.6 L11.8 2.6 L10.6 4.2 H1 Z" fill="#e2a20a"/>
<path d="M5 19 V11.6 C5 11.2 5.3 11 5.7 11 H18.3 C18.7 11 19 11.2 19 11.6 V19 H15.1 V14.2 H8.9 V19 Z" fill="url(#exa)"/>
</svg><div style="position:absolute;left:440px;top:766px;width:32px;height:2px;background:#1a68c0"></div><div style="position:absolute;left:472px;top:766px;width:8px;height:2px;background:#70a8e0"></div><svg style="position:absolute;left:497px;top:736px" width="24" height="23" viewBox="0 0 24 23">
<path d="M0 7.8 L12 15 L0 23 Z" fill="#26acec"/>
<path d="M24 7.8 L12 15 L24 23 Z" fill="#3ccaf4"/>
<path d="M0 23 L12 15 L24 23 Z" fill="#1a92e0"/>
<path d="M0 7.8 L12 0.6 L24 7.8 Z" fill="#0a5cb0"/>
<path d="M2.3 8.3 L21.7 8.3 L12 14.8 Z" fill="#f4f4f4"/>
</svg><svg style="position:absolute;left:546px;top:735px" width="28" height="28" viewBox="0 0 28 28">
<circle cx="12" cy="12.8" r="11.9" fill="#5865f2"/>
<path d="M4.2 15.5 C4.2 11 5.6 8.3 7 7.6 L9.3 7 L9.9 8 H14.1 L14.7 7 L17 7.6 C18.4 8.3 19.8 11 19.8 15.5 C18.6 16.6 17 17.3 15.8 17.4 L15 16 H9 L8.2 17.4 C7 17.3 5.4 16.6 4.2 15.5 Z" fill="#fff"/>
<circle cx="9.3" cy="12.3" r="1.4" fill="#5865f2"/><circle cx="14.7" cy="12.3" r="1.4" fill="#5865f2"/>
<circle cx="18.1" cy="19" r="6.9" fill="#e84a4f"/>
<text x="18.1" y="22.6" font-family="Liberation Sans" font-size="10" fill="#fff" text-anchor="middle">9+</text>
</svg><div style="position:absolute;left:538px;top:766px;width:40px;height:2px;background:#1a68c0"></div><svg style="position:absolute;left:595px;top:736px" width="24" height="24" viewBox="0 0 24 24">
<rect width="24" height="24" fill="#e8702a"/>
<circle cx="12" cy="8" r="5" fill="none" stroke="#f8c8a0" stroke-width="1"/>
<path d="M10 6 V16 L8 14 C7 13 6 14 7 15 L11 21 H18 C19 19 19.5 17 19.5 15 V11 C19.5 10 18 10 18 11 V10.5 C18 9.5 16.5 9.5 16.5 10.5 V10 C16.5 9 15 9 15 10 V10 H13.5 V6 C13.5 4.5 10 4.5 10 6 Z" fill="#fff" stroke="#222" stroke-width="0.8"/>
</svg><div style="position:absolute;left:587px;top:766px;width:40px;height:2px;background:#1a68c0"></div><div style="position:absolute;left:632px;top:728px;width:48px;height:40px;background:#e2eef3"></div><svg style="position:absolute;left:644px;top:736px" width="24" height="24" viewBox="0 0 24 24">
<defs><linearGradient id="lbg" x1="0" y1="0" x2="0" y2="1"><stop offset="0" stop-color="#6aa8de"/><stop offset="0.5" stop-color="#2f6eaa"/><stop offset="1" stop-color="#0f3d6e"/></linearGradient>
<mask id="lbm"><rect width="24" height="24" fill="#fff"/><path d="M17.2 4.2 L18.6 7.6 L22 8.8" stroke="#000" stroke-width="2.2" fill="none"/></mask></defs>
<rect width="24" height="24" rx="4" fill="url(#lbg)"/>
<g mask="url(#lbm)">
<path d="M4.5 4.5 L11 11" stroke="#f4f4f4" stroke-width="1.5" stroke-linecap="round"/>
<path d="M11.5 11.5 L17.4 17.4" stroke="#f4f4f4" stroke-width="3" stroke-linecap="round"/>
<path d="M5.8 18 L15.5 8.5" stroke="#f4f4f4" stroke-width="3" stroke-linecap="round"/>
<circle cx="17" cy="7" r="3.4" fill="#f4f4f4"/>
</g>
</svg><div style="position:absolute;left:632px;top:766px;width:48px;height:2px;background:#1a68c0"></div><svg style="position:absolute;left:893px;top:738px" width="28" height="20" viewBox="0 0 28 20">
<path d="M2.8 2.6 H23 V5.6 H25.3 V15.3 C25.3 16.7 24.5 17.5 23.2 17.5 H4.8 C3.5 17.5 2.8 16.7 2.8 15.3 Z" fill="none" stroke="#000" stroke-width="1.8"/>
<path d="M22.5 5.6 V15 M5.3 5.6 H19.8 M14.7 8.7 H19.8 M14.7 11.6 H19.8 M14.7 14.5 H19.8" stroke="#000" stroke-width="1.3"/>
<rect x="5.9" y="8.5" width="5.6" height="5.6" fill="none" stroke="#000" stroke-width="1.5"/>
</svg><div style="position:absolute;left:928px;top:735.70px;line-height:26px;font-size:13px;font-family:'Liberation Sans', sans-serif;color:#1a1a1a;white-space:nowrap;letter-spacing:-0.3px">18°C</div><div style="position:absolute;left:965px;top:734.37px;line-height:28px;font-size:14px;font-family:'Liberation Sans', sans-serif;color:#1a1a1a;white-space:nowrap;letter-spacing:0.08px">Stark bewölkt</div><svg style="position:absolute;left:1072px;top:744px" width="14" height="9"><path d="M1 8 L7 1.5 L13 8" fill="none" stroke="#222" stroke-width="1.4"/></svg><svg style="position:absolute;left:1096px;top:739px" width="15" height="18" viewBox="0 0 15 18">
<rect x="2.8" y="6.3" width="8" height="5.8" rx="1.2" fill="none" stroke="#111" stroke-width="1.3"/>
<path d="M10.8 7.5 L12.6 6.6 V11.8 L10.8 10.9" fill="none" stroke="#111" stroke-width="1.3"/>
<path d="M3 2.6 Q7 0.6 11 2.6 M3 15.6 Q7 17.6 11 15.6" fill="none" stroke="#111" stroke-width="1.1"/></svg><svg style="position:absolute;left:1118px;top:741px" width="18" height="13" viewBox="0 0 18 13">
<defs><linearGradient id="cld" x1="0" y1="0" x2="0" y2="1"><stop offset="0" stop-color="#6a6a6a"/><stop offset="0.55" stop-color="#b0b0b0"/><stop offset="0.6" stop-color="#e8e8e8"/><stop offset="1" stop-color="#f4f4f4"/></linearGradient></defs>
<path d="M4 11.6 C2 11.6 1 10.3 1 9 C1 7.4 2.4 6.3 3.8 6.3 C4.6 3.2 6.8 1.4 9.3 1.4 C12 1.4 13.8 3.3 14.3 5.6 C16.2 5.8 17.2 7.3 17.2 8.7 C17.2 10.4 16 11.6 14.3 11.6 Z" fill="url(#cld)" stroke="#111" stroke-width="1.1"/></svg><svg style="position:absolute;left:1143px;top:743px" width="17" height="11" viewBox="0 0 17 11">
<rect x="1.6" y="1.6" width="12.6" height="7.8" fill="none" stroke="#111" stroke-width="1.4"/><rect x="3.3" y="3.3" width="8.4" height="4.4" fill="#000"/><rect x="14.5" y="4" width="1.6" height="3" fill="#111"/></svg><svg style="position:absolute;left:1166px;top:739px" width="18" height="18" viewBox="0 0 18 18">
<circle cx="8.8" cy="8.6" r="7.4" fill="none" stroke="#111" stroke-width="1.2"/><ellipse cx="8.8" cy="8.6" rx="3.3" ry="7.4" fill="none" stroke="#111" stroke-width="1.1"/>
<path d="M1.6 6 H16 M1.6 11.2 H10.5" stroke="#111" stroke-width="1.1"/>
<circle cx="13.3" cy="13.5" r="3.7" fill="#d4e0ea" stroke="#111" stroke-width="1.2"/><path d="M11.2 15.6 L15.4 11.4" stroke="#111" stroke-width="1.2"/></svg><svg style="position:absolute;left:1190px;top:741px" width="19" height="15" viewBox="0 0 19 15">
<path d="M1.5 5 H4 L7 2 V13 L4 10 H1.5 Z" fill="none" stroke="#111" stroke-width="1.2"/>
<path d="M9.6 5.2 Q10.6 7.5 9.6 9.8 M12 3.2 Q14.3 7.5 12 11.8" fill="none" stroke="#111" stroke-width="1.2"/>
<path d="M14.8 1 Q18.2 7.5 14.8 14" fill="none" stroke="#999" stroke-width="0.9"/></svg><div style="position:absolute;left:1218px;top:736.03px;line-height:24px;font-size:12px;font-family:'Liberation Sans', sans-serif;color:#1a1a1a;white-space:nowrap;letter-spacing:-1px">DEU</div><div style="position:absolute;left:1266px;top:727.03px;line-height:24px;font-size:12px;font-family:'Liberation Sans', sans-serif;color:#1a1a1a;white-space:nowrap;letter-spacing:-0.6px">10:06</div><div style="position:absolute;left:1254px;top:745.03px;line-height:24px;font-size:12px;font-family:'Liberation Sans', sans-serif;color:#1a1a1a;white-space:nowrap;letter-spacing:-0.7px">16.05.2023</div><svg style="position:absolute;left:1324px;top:739px" width="26" height="26" viewBox="0 0 26 26">
<path d="M1 1 H17 V13 H7 L3 17 V13 H1 Z" fill="#111"/>
<path d="M4 4.5 H14 M4 7 H14 M4 9.5 H11" stroke="#fff" stroke-width="1"/>
<circle cx="16.5" cy="16" r="7" fill="#c8c8c8" stroke="#888" stroke-width="1.2"/>
<text x="16.5" y="20.3" font-family="Liberation Sans" font-size="12" fill="#222" text-anchor="middle">1</text></svg><div style="position:absolute;left:1361px;top:728px;width:1px;height:40px;background:#a8b4c0"></div>
</body></html>
